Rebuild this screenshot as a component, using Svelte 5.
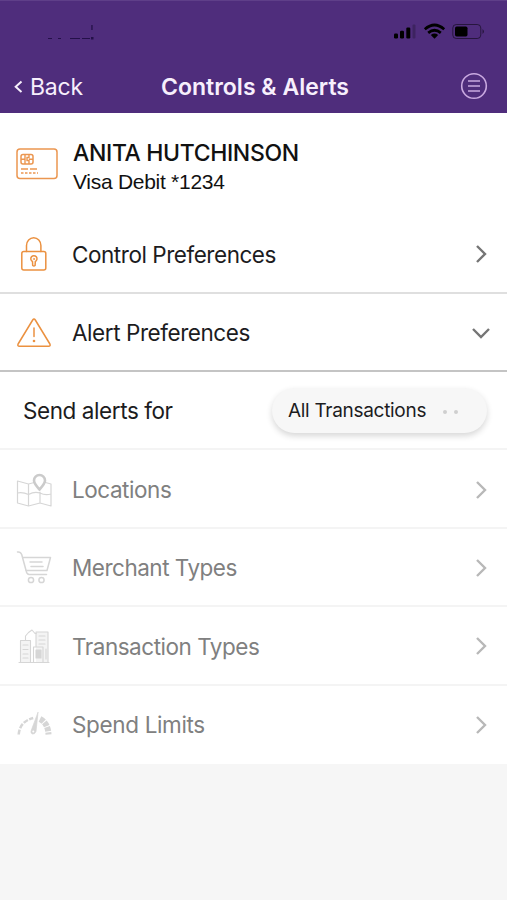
<script lang="ts">
  type Row = { id: string; label: string; fit: string; open?: boolean }

  const sections: Row[] = [
    { id: 'lock', label: 'Control Preferences', fit: '-0.46px' },
    { id: 'warning', label: 'Alert Preferences', fit: '-0.44px', open: true },
  ]

  const options: Row[] = [
    { id: 'map', label: 'Locations', fit: '-0.45px' },
    { id: 'cart', label: 'Merchant Types', fit: '-0.5px' },
    { id: 'buildings', label: 'Transaction Types', fit: '-0.48px' },
    { id: 'gauge', label: 'Spend Limits', fit: '-0.35px' },
  ]
</script>

{#snippet icon(id: string)}
  <svg class="icon" width="36" height="40" viewBox="0 0 36 40" fill="none" stroke="currentColor" stroke-width="1.5" stroke-linejoin="round" stroke-linecap="round">
    {#if id === 'lock'}
      <rect x="5.8" y="17.500" width="24" height="18.5" rx="2" />
      <path d="M10.5 17.500v-6a7.2 7.8 0 0 1 14.4 0v6" />
      <path d="M16.500 27.500a3.100 3.100 0 1 1 2.800 0l-.2 4q-1.200 1-2.400 0z" />
      <circle cx="17.900" cy="25" r=".7" stroke-width=".8" />
    {:else if id === 'warning'}
      <path d="M16.7 7q1.3-2.2 2.6 0l14.6 24q1 2.2-1.4 2.3h-29q-2.4-.1-1.4-2.3z" />
      <path d="M18 15v8.5" />
      <circle cx="18" cy="28" r="1.300" fill="currentColor" stroke="none" />
    {:else if id === 'map'}
      <g stroke-width="1.200">
        <path d="M1.500 11 12.500 14 24 11 35 14V36L24 33 12.500 36 1.500 33zM12.500 14v22M24 22v11M1.500 23q5.500-1 11 1.500 6-3.500 11.500-1.500 5 2.500 11 1" />
      </g>
      <path d="M23.500 19.500q-5.500-6-5.500-9a5.500 5.500 0 0 1 11 0q0 3-5.500 9z" fill="#fff" stroke="#cbcbcb" stroke-width="2.600" />
    {:else if id === 'cart'}
      <g stroke-width="1.5">
        <path d="M1.500 4q3-.5 4.200 2.500l4.500 16.500q.5 3.500 3 3.500h17.300M7 9.500h27.500L31 22.500H9.800" />
        <path d="M14 14h12M15 18.500h12" />
        <circle cx="15" cy="32" r="2.600" />
        <circle cx="25.500" cy="32" r="2.600" />
      </g>
    {:else if id === 'buildings'}
      <path d="M4.500 36V14.500h10V36zM20 6h12v30H20z" fill="#f4f4f4" stroke="none" />
      <g stroke-width="1.100">
        <path d="M3 36.500h30M4.500 36.500v-22h10v22M9.500 14.500V10l3-3.500 3.500-2.500 3 3.500h1.500M20 20V6h12v30.500M17.500 36.500V21h9.500v15.500" />
        <path d="M7 19h5M7 23.500h5M7 28h5M7 32h5M23 10h6M23 14h6M23 18h6M30 23v10" />
        <rect x="20" y="24" width="5" height="8" fill="currentColor" />
      </g>
    {:else}
      <path d="M2.700 29.500q1-13 14.500-16.500" stroke-width="2.500" stroke-dasharray="5 1.500" stroke-linecap="butt" />
      <path d="M24 14q8 4 8.500 15.500" stroke-width="6" stroke-dasharray="4.500 1" stroke-linecap="butt" />
      <path d="M22 7.500 20 26.500q-1.300 3-3.500 2.500-2.500-1-1.300-3.500z" fill="currentColor" stroke-width=".7" />
      <circle cx="17.300" cy="26.500" r="1" fill="#fff" stroke="none" />
    {/if}
  </svg>
{/snippet}

{#snippet row(item: Row)}
  <button type="button" class="row">
    {@render icon(item.id)}
    <span class="label" style="letter-spacing: {item.fit}">{item.label}</span>
    <svg class="chevron" width="20" height="20" viewBox="0 0 20 20">
      <path d={item.open ? 'M2 6l8 8 8-8' : 'M6 2l8 8-8 8'} />
    </svg>
  </button>
{/snippet}

<div class="screen">
  <header>
    <div class="status">
      <svg class="remnant" width="48" height="18" viewBox="0 0 48 18" fill="#241049">
        <path d="M0 13h4v1H0zM10 13h3v1h-3zM22 13h10v1H22zM34 13h8v1h-8zM43 12h2.500v2.500H43zM43.300 0h1.300v5h-1.300z" />
      </svg>
      <svg width="92" height="20" viewBox="0 0 92 20">
        <rect x="0" y="12.500" width="4" height="5" rx="1.200" />
        <rect x="6" y="9.700" width="4" height="7.800" rx="1.200" />
        <rect x="12.300" y="6.500" width="4" height="11" rx="1.200" />
        <rect x="18.500" y="3.500" width="3" height="14" rx="1" opacity=".22" />
        <g fill="none" stroke="#000" stroke-width="2.700">
          <path d="M30.800 8.200q9.700-8.400 19.400 0" />
          <path d="M34.200 11.900q6.300-5.300 12.600 0" />
        </g>
        <path d="M36.800 14q3.700-2.800 7.400 0l-3.700 3.700z" />
        <rect x="58.800" y="3.500" width="28" height="14" rx="3.500" fill="none" stroke="#000" opacity=".5" />
        <rect x="61" y="5.500" width="12.500" height="10" rx="1.700" />
        <path d="M88.500 8q3 2.500 0 5z" opacity=".5" />
      </svg>
    </div>
    <nav>
      <button type="button" class="back">
        <svg width="9" height="14" viewBox="0 0 9 14"><path d="M7.500 1.500 1.700 6.800l5.800 5.300" /></svg>
        <span>Back</span>
      </button>
      <h1>Controls &amp; Alerts</h1>
      <button type="button" class="menu" aria-label="Menu">
        <svg width="28" height="28" viewBox="0 0 28 28">
          <circle cx="14" cy="14" r="12.300" />
          <path d="M8 9h12M8 14h12M8 19h12" />
        </svg>
      </button>
    </nav>
  </header>

  <section class="card">
    <svg width="42" height="32" viewBox="0 0 42 32" fill="none" stroke="#eb9650" stroke-width="1.500">
      <rect x="1" y="1" width="40" height="29.500" rx="3" />
      <rect x="5" y="6.500" width="12" height="9.500" rx="2" />
      <path d="M9 6.500v9.500M5 11.300h4M13 6.500v3h-2v3h2V16M13 11.300h4" stroke-width="1.400" />
      <path d="M5 21h7M14 21h7" />
      <path d="M5 25h17" stroke-width="1.500" stroke-dasharray="2.500 1.500" />
    </svg>
    <div>
      <h2>ANITA HUTCHINSON</h2>
      <p>Visa Debit *1234</p>
    </div>
  </section>

  <div class="sections">
    {#each sections as item}
      {@render row(item)}
    {/each}
  </div>

  <div class="send">
    <span>Send alerts for</span>
    <button type="button" class="pill">
      <span>All Transactions</span>
      <i></i><i></i>
    </button>
  </div>

  <div class="options">
    {#each options as item}
      {@render row(item)}
    {/each}
  </div>
</div>

<style>
  :global(body) {
    margin: 0;
    background: #f6f6f6;
  }

  .screen {
    height: 900px;
    font-family: Inter, 'Liberation Sans', sans-serif;
    color: #1c1c1e;
    background: #f6f6f6;
    overflow: hidden;
  }

  button {
    padding: 0;
    border: 0;
    background: none;
    color: inherit;
    font: inherit;
  }

  h1, h2, p {
    margin: 0;
  }

  svg {
    display: block;
    flex: none;
  }

  header {
    box-sizing: border-box;
    height: 113px;
    padding-top: 20px;
    background: #4f2d7c;
    border-top: 1px solid #5f3f89;
    color: #f7effc;
  }

  .status {
    display: flex;
    justify-content: space-between;
    height: 20px;
    padding: 0 21px 0 48px;
  }

  .remnant {
    margin-top: 4px;
  }

  nav {
    display: grid;
    grid-template-columns: 1fr auto 1fr;
    align-items: center;
    height: 44px;
    margin-top: 23px;
    padding: 0 14px;
  }

  .back {
    display: flex;
    align-items: center;
    gap: 7px;
    padding-top: 1px;
    font-size: 23px;
    letter-spacing: -0.2px;
  }

  .back path {
    fill: none;
    stroke: #f7effc;
    stroke-width: 2;
  }

  h1 {
    padding: 1px 0 0 3px;
    font-size: 23px;
    font-weight: 600;
    letter-spacing: 0.02px;
  }

  .menu {
    justify-self: end;
    margin-right: 5px;
  }

  .menu svg {
    fill: none;
    stroke: #c9a9e0;
    stroke-width: 1.6;
  }

  .card {
    box-sizing: border-box;
    display: flex;
    gap: 15px;
    height: 102px;
    padding: 24px 16px 0;
    background: #fff;
  }

  .card svg {
    margin-top: 11px;
  }

  h2 {
    font-size: 23px;
    font-weight: 500;
    letter-spacing: -0.36px;
    line-height: 32px;
    color: #111;
  }

  p {
    font-family: 'Liberation Sans', Arial, sans-serif;
    font-size: 21px;
    letter-spacing: -0.28px;
    line-height: 26px;
    color: #111;
  }

  .row {
    box-sizing: border-box;
    display: flex;
    align-items: center;
    width: 100%;
    height: 78.6px;
    padding: 2px 16px 0;
    background: #fff;
    text-align: left;
  }

  .label {
    flex: 1;
    margin-left: 20px;
    font-size: 22.5px;
  }

  .chevron {
    fill: none;
    stroke: #757575;
    stroke-width: 2.4;
  }

  .sections .row {
    border-bottom: 2px solid #dfdfdf;
  }

  .sections .row:last-child {
    border-bottom-color: #c4c4c4;
  }

  .sections .icon {
    color: #eb9140;
  }

  .send {
    box-sizing: border-box;
    display: flex;
    align-items: center;
    justify-content: space-between;
    height: 78.2px;
    padding: 1px 20px 0 23px;
    border-bottom: 2px solid #f4f4f4;
    background: #fff;
    font-size: 22.5px;
    letter-spacing: -0.42px;
  }

  .pill {
    box-sizing: border-box;
    display: flex;
    align-items: center;
    width: 215px;
    height: 45px;
    padding-left: 16px;
    border-radius: 23px;
    background: #f7f7f7;
    box-shadow: 0 3px 6px rgba(0, 0, 0, 0.16);
    font-size: 19px;
    letter-spacing: -0.3px;
    text-align: left;
  }

  .pill span {
    width: 155px;
    white-space: nowrap;
  }

  i {
    width: 4px;
    height: 4px;
    margin: 3px 7px 0 0;
    border-radius: 50%;
    background: #cfcfcf;
  }

  .options .row {
    height: 78.4px;
    border-bottom: 2px solid #f4f4f4;
    color: #808080;
  }

  .options .row:last-child {
    border-bottom-color: #fff;
  }

  .options .icon {
    color: #d6d6d6;
  }

  .options .chevron {
    stroke: #b8b8b8;
  }
</style>
